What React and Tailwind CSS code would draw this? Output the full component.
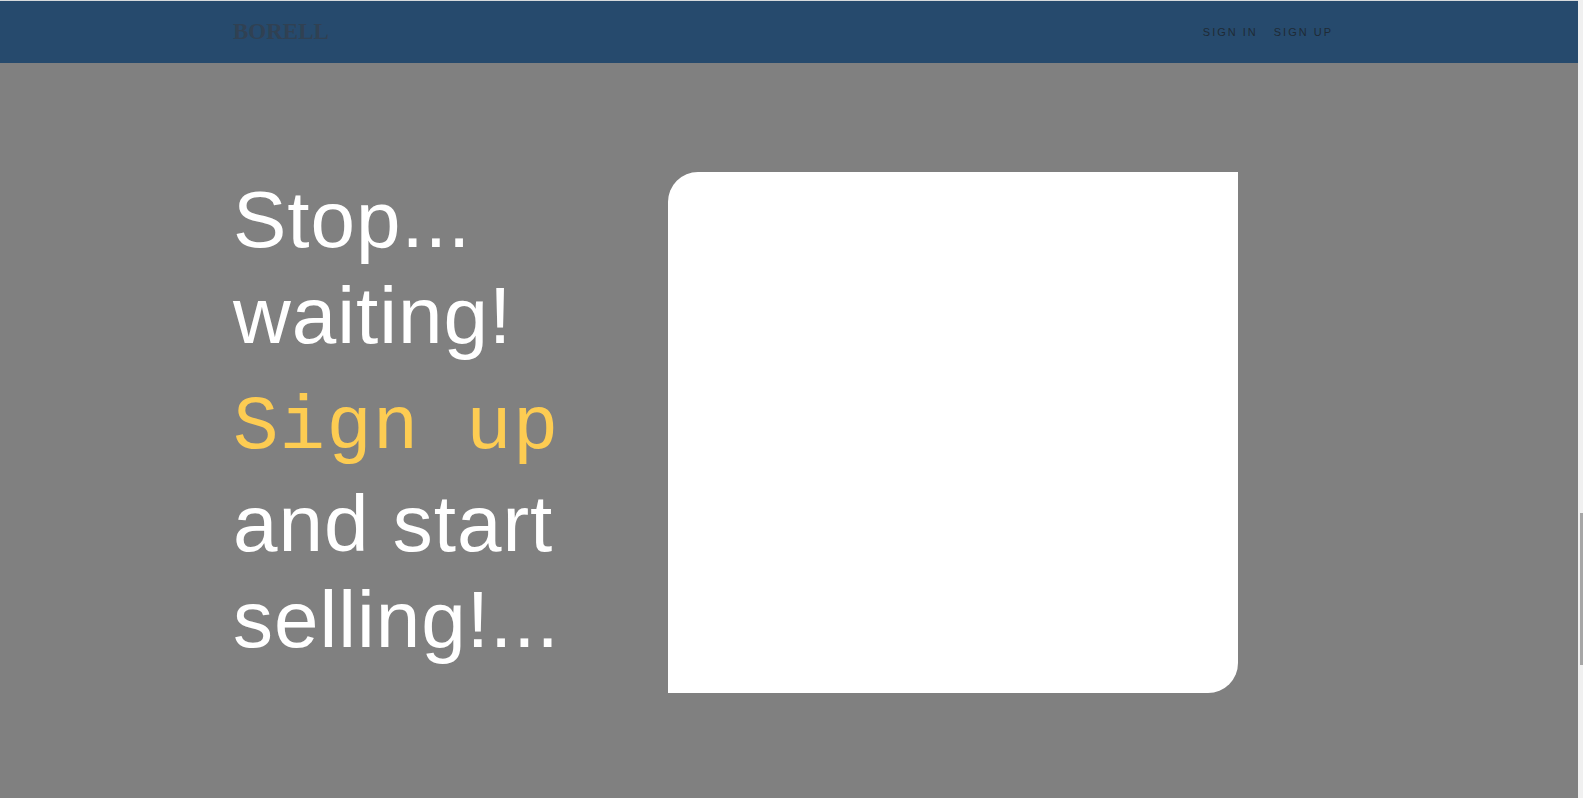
function Navbar() {
  return (
    <header className="border-t border-[#d6dadc] bg-[#264a6d]">
      <nav aria-label="Main" className="mx-auto flex h-[62px] max-w-[1142px] items-center justify-between px-[15px]">
        <a href="#home" className="font-['Liberation_Serif',serif] text-[23px] leading-8 font-bold text-[#304153]">
          BORELL
        </a>
        <ul className="flex gap-4 pr-3 font-['Liberation_Sans',sans-serif] text-[11px] leading-4 tracking-[2px] text-[#1f2a35]">
          <li>
            <a href="#signin">SIGN IN</a>
          </li>
          <li>
            <a href="#signup">SIGN UP</a>
          </li>
        </ul>
      </nav>
    </header>
  );
}

function Hero() {
  return (
    <main className="mx-auto flex w-full max-w-[1142px] items-start px-[15px] pt-[109px] pb-[105px]">
      <h1 className="w-[435px] shrink-0 font-['Liberation_Sans',sans-serif] text-[80px] leading-[96px] tracking-[1px] text-white">
        <span className="block">Stop...</span>
        <span className="block">waiting!</span>
        <span className="block pt-4 font-['Liberation_Mono',monospace] text-[76px] leading-[96px] text-[#fdcc52]">
          Sign up
        </span>
        <span className="block">and start</span>
        <span className="block">selling!...</span>
      </h1>
      <section aria-label="Video" className="h-[521px] w-full max-w-[570px] rounded-tl-[30px] rounded-br-[30px] bg-white" />
    </main>
  );
}

export default function App() {
  return (
    <div className="flex min-h-screen bg-[#808080]">
      <div className="min-w-0 flex-1">
        <Navbar />
        <Hero />
      </div>
      <div aria-hidden="true" className="w-[5px] bg-[#f0f0f0] pt-[513px] pl-[2px]">
        <div className="h-[152px] bg-[#a6a6a6]" />
      </div>
    </div>
  );
}
